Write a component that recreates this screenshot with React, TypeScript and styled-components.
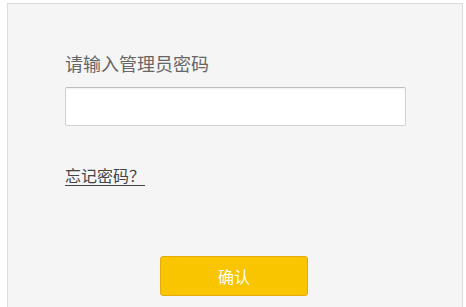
import React from 'react'
import styled, { createGlobalStyle } from 'styled-components'

const GlobalStyle = createGlobalStyle`
  html, body {
    margin: 0;
    padding: 0;
    background: #ffffff;
  }
  body {
    font-family: "Liberation Sans", "Noto Sans CJK SC", sans-serif;
    overflow: hidden;
  }
`

const Panel = styled.div`
  box-sizing: border-box;
  margin: 3px 0 0 7px;
  width: 456px;
  height: 304px;
  background: #f5f5f5;
  border: 1px solid #dcdcdc;
  border-bottom: none;
  padding: 47px 0 0 57px;
  display: flex;
  flex-direction: column;
  align-items: flex-start;
`

const Label = styled.label`
  font-size: 18px;
  line-height: 24px;
  color: #666666;
  font-family: "Noto Sans CJK SC", sans-serif;
`

const PasswordInput = styled.input`
  box-sizing: border-box;
  margin-top: 12px;
  width: 341px;
  height: 39px;
  border: 1px solid #d2d2d2;
  border-top-color: #bdbdbd;
  border-radius: 2px;
  background: #ffffff;
  box-shadow: inset 0 1px 2px rgba(0, 0, 0, 0.06);
  outline: none;
  padding: 0 8px;
  font-size: 16px;
`

const ForgotLink = styled.a`
  margin-top: 39px;
  font-size: 16px;
  line-height: 20px;
  color: #444444;
  font-family: "Noto Sans CJK SC", sans-serif;
  text-decoration: underline;
  text-underline-offset: 3px;
  cursor: pointer;
`

const ButtonRow = styled.div`
  align-self: stretch;
  display: flex;
  padding-left: 95px;
  margin-top: 71px;
`

const ConfirmButton = styled.button`
  box-sizing: border-box;
  width: 148px;
  height: 40px;
  background: #f9c400;
  border: 1px solid #e3ab12;
  border-radius: 3px;
  color: #ffffff;
  font-size: 16px;
  font-family: "Noto Sans CJK SC", sans-serif;
  cursor: pointer;
`

export default function App() {
  return (
    <>
      <GlobalStyle />
      <Panel>
        <Label htmlFor="pwd">请输入管理员密码</Label>
        <PasswordInput id="pwd" type="password" />
        <ForgotLink>忘记密码？</ForgotLink>
        <ButtonRow>
          <ConfirmButton>确认</ConfirmButton>
        </ButtonRow>
      </Panel>
    </>
  )
}
